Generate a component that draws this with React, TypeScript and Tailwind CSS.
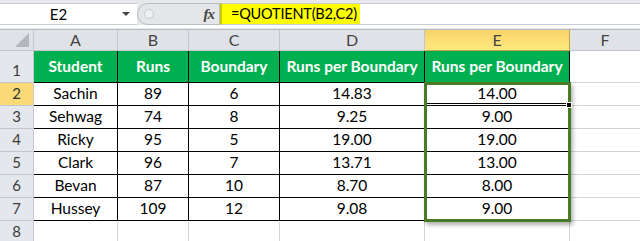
const cols = ["A", "B", "C", "D", "E", "F"];
const widths = ["w-[84px]", "w-[71px]", "w-[91px]", "w-[145px]", "w-[145px]", "w-[71px]"];

const header = ["Student", "Runs", "Boundary", "Runs per Boundary", "Runs per Boundary"];

const rows = [
  ["Sachin", "89", "6", "14.83", "14.00"],
  ["Sehwag", "74", "8", "9.25", "9.00"],
  ["Ricky", "95", "5", "19.00", "19.00"],
  ["Clark", "96", "7", "13.71", "13.00"],
  ["Bevan", "87", "10", "8.70", "8.00"],
  ["Hussey", "109", "12", "9.08", "9.00"],
];

function RowHead({ n, active, h }: { n: number; active?: boolean; h: string }) {
  return (
    <div
      className={`${h} w-[34px] shrink-0 flex items-end justify-center pb-[1px] border-r border-b border-[#c3c7cd] text-[15px] ${
        active ? "bg-[#f9d978] text-[#333]" : "bg-[#e4e7eb] text-[#3c3c3c]"
      }`}
    >
      {n}
    </div>
  );
}

export default function App() {
  return (
    <div className="relative w-[640px] h-[241px] overflow-hidden bg-white font-['Lato','Liberation_Sans',sans-serif] text-black">
      {/* formula bar */}
      <div className="h-[29px] bg-[#e6e8eb] pt-[3px]">
        <div className="flex h-[22px] border-b-[3px] border-white box-content">
          <div className="relative w-[137px] bg-white border-y border-[#c9ccd0] flex items-center justify-center text-[15px]">
            <span className="mr-[20px]">E2</span>
            <span className="absolute right-[7px] top-[8px] w-0 h-0 border-l-[4px] border-r-[4px] border-t-[4px] border-l-transparent border-r-transparent border-t-[#444]" />
          </div>
          <div className="relative w-[83px] bg-[#e4e6e9] border border-[#b9bcc1] rounded-l-[12px] flex items-center">
            <span className="ml-[6px] w-[10px] h-[10px] rounded-full bg-[#eef0f2] border border-[#c6c9cd]" />
            <span className="ml-auto mr-[5px] font-['Liberation_Serif',serif] italic font-bold text-[15px] text-[#444] tracking-[-1px]">
              fx
            </span>
          </div>
          <div className="w-[140px] bg-[#ffff00] border-l-2 border-[#c8c800] border-y border-y-[#c9ccd0] flex items-center pl-[9px] text-[14.5px] whitespace-nowrap tracking-[-0.2px]">
            =QUOTIENT(B2,C2)
          </div>
          <div className="flex-1 bg-white border-y border-[#c9ccd0]" />
        </div>
      </div>

      {/* column headers */}
      <div className="flex h-[22px] border-t border-[#b8bcc2]">
        <div className="relative w-[34px] shrink-0 bg-[#dfe3e8] border-r border-b border-[#c3c7cd]">
          <svg className="absolute right-[4px] bottom-[3px]" width="14" height="14" viewBox="0 0 14 14">
            <path d="M14 0 L14 14 L0 14 Z" fill="#b3b7bd" />
          </svg>
        </div>
        {cols.map((c, i) => (
          <div
            key={c}
            className={`${widths[i]} shrink-0 flex items-center justify-center text-[16px] border-r border-b ${
              c === "E"
                ? "bg-gradient-to-b from-[#f8d36a] to-[#ffea80] border-[#c9a247] text-[#444]"
                : "bg-[#dfe3e8] border-[#c3c7cd] text-[#444]"
            }`}
          >
            {c}
          </div>
        ))}
      </div>

      {/* row 1 */}
      <div className="flex">
        <RowHead n={1} h="h-[32px]" />
        {header.map((t, i) => (
          <div
            key={i}
            className={`${widths[i]} h-[32px] shrink-0 bg-[#00b050] border-r border-b border-black text-white font-bold text-[15.5px] flex items-end justify-center pb-[4px]`}
          >
            {t}
          </div>
        ))}
        <div className="w-[71px] h-[32px] shrink-0 border-r border-b border-[#d4d4d4]" />
      </div>

      {/* data rows */}
      {rows.map((r, ri) => (
        <div key={ri} className="flex">
          <RowHead n={ri + 2} active={ri === 0} h="h-[23px]" />
          {r.map((t, i) => (
            <div
              key={i}
              className={`${widths[i]} h-[23px] shrink-0 border-r border-b border-black text-[15.5px] flex items-center justify-center`}
            >
              {t}
            </div>
          ))}
          <div className="w-[71px] h-[23px] shrink-0 border-r border-b border-[#d4d4d4]" />
        </div>
      ))}

      {/* row 8 */}
      <div className="flex">
        <RowHead n={8} h="h-[23px]" />
        {cols.map((c, i) => (
          <div key={c} className={`${widths[i]} h-[23px] shrink-0 border-r border-b border-[#d4d4d4]`} />
        ))}
      </div>

      {/* selection E2:E7 */}
      <div className="absolute left-[424px] top-[82px] w-[147px] h-[140px] border-[3px] border-[#4a7a26] shadow-[2px_3px_4px_rgba(0,0,0,0.3)] pointer-events-none" />
      <div className="absolute left-[427px] top-[103px] w-[141px] h-[3px] border-y border-black bg-white" />
      <div className="absolute left-[566px] top-[102px] w-[6px] h-[6px] bg-black border border-white" />
    </div>
  );
}
